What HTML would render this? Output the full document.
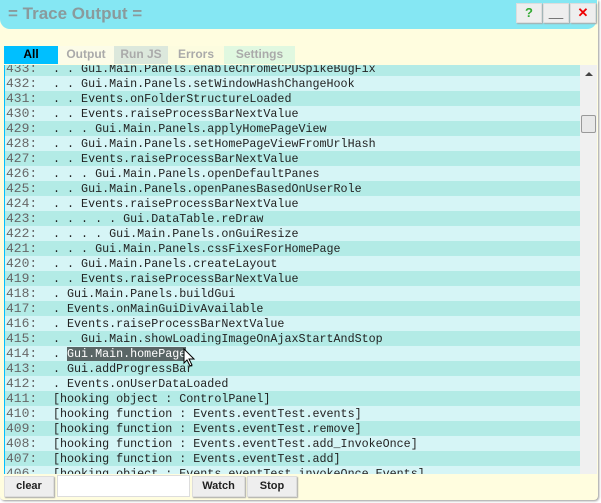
<html><head><style>
body{margin:0;width:601px;height:503px;background:#fff;position:relative;overflow:hidden;font-family:"Liberation Sans",sans-serif}
.win{position:absolute;left:0;top:0;width:598px;height:500px;background:#fffddf;border-radius:0 0 4px 4px;box-shadow:1px 1px 2px #999}
.hdr{position:absolute;left:0;top:0;width:597px;height:29px;background:#85e7f3;border-radius:0 0 10px 10px}
.title{position:absolute;left:8px;top:4px;font-size:17px;font-weight:bold;color:#8a9a9c}
.wb{position:absolute;top:3px;width:24px;height:18px;background:#eee;border:1px solid #ddd;box-shadow:1px 1px 1px #aaa;text-align:center;font-weight:bold;font-size:13px;line-height:18px}
.tab{position:absolute;top:46px;height:18px;font-size:12px;font-weight:bold;color:#aaa;text-align:center;line-height:17px}
.list{position:absolute;left:4px;top:65px;width:575px;height:409px;overflow:hidden;border-left:1px solid #00bfff;border-right:1px solid #00bfff}
.row{height:15px;line-height:15px;font-family:"Liberation Mono",monospace;font-size:11.7px;color:#222;white-space:pre;position:relative}
.row:nth-child(odd){background:#b3ebe6}.row:nth-child(even){background:#d6f5f6}
.n{color:#666;display:inline-block;width:47px;padding-left:1px;font-size:13px}
.sb{position:absolute;left:580px;top:65px;width:17px;height:409px;background:#f0f0f0}
.btn{position:absolute;top:476px;height:19px;background:#eee;border:1px solid #ddd;box-shadow:1px 1px 1px #aaa;font-size:11px;font-weight:bold;text-align:center;line-height:19px;color:#222}
</style></head><body>
<div class="win">
<div class="hdr"><div class="title">= Trace Output =</div>
<div class="wb" style="left:516px;color:#3a3">?</div>
<div class="wb" style="left:543px">__</div>
<div class="wb" style="left:570px;color:#e00">✕</div></div>
<div class="tab" style="left:4px;width:54px;background:#00bfff;color:#000">All</div>
<div class="tab" style="left:58px;width:56px;background:#fcfce8">Output</div>
<div class="tab" style="left:114px;width:54px;background:#dce8dc">Run JS</div>
<div class="tab" style="left:168px;width:56px;background:#fcfcdf">Errors</div>
<div class="tab" style="left:224px;width:71px;background:#e0f8e0">Settings</div>
<div class="list"><div style="margin-top:-4px">
<div class="row"><span class="n">433:</span>. . Gui.Main.Panels.enableChromeCPUSpikeBugFix</div>
<div class="row"><span class="n">432:</span>. . Gui.Main.Panels.setWindowHashChangeHook</div>
<div class="row"><span class="n">431:</span>. . Events.onFolderStructureLoaded</div>
<div class="row"><span class="n">430:</span>. . Events.raiseProcessBarNextValue</div>
<div class="row"><span class="n">429:</span>. . . Gui.Main.Panels.applyHomePageView</div>
<div class="row"><span class="n">428:</span>. . Gui.Main.Panels.setHomePageViewFromUrlHash</div>
<div class="row"><span class="n">427:</span>. . Events.raiseProcessBarNextValue</div>
<div class="row"><span class="n">426:</span>. . . Gui.Main.Panels.openDefaultPanes</div>
<div class="row"><span class="n">425:</span>. . Gui.Main.Panels.openPanesBasedOnUserRole</div>
<div class="row"><span class="n">424:</span>. . Events.raiseProcessBarNextValue</div>
<div class="row"><span class="n">423:</span>. . . . . Gui.DataTable.reDraw</div>
<div class="row"><span class="n">422:</span>. . . . Gui.Main.Panels.onGuiResize</div>
<div class="row"><span class="n">421:</span>. . . Gui.Main.Panels.cssFixesForHomePage</div>
<div class="row"><span class="n">420:</span>. . Gui.Main.Panels.createLayout</div>
<div class="row"><span class="n">419:</span>. . Events.raiseProcessBarNextValue</div>
<div class="row"><span class="n">418:</span>. Gui.Main.Panels.buildGui</div>
<div class="row"><span class="n">417:</span>. Events.onMainGuiDivAvailable</div>
<div class="row"><span class="n">416:</span>. Events.raiseProcessBarNextValue</div>
<div class="row"><span class="n">415:</span>. . Gui.Main.showLoadingImageOnAjaxStartAndStop</div>
<div class="row"><span class="n">414:</span>. <span style="background:#5a6666;color:#fff">Gui.Main.homePage</span></div>
<div class="row"><span class="n">413:</span>. Gui.addProgressBar</div>
<div class="row"><span class="n">412:</span>. Events.onUserDataLoaded</div>
<div class="row"><span class="n">411:</span>[hooking object : ControlPanel]</div>
<div class="row"><span class="n">410:</span>[hooking function : Events.eventTest.events]</div>
<div class="row"><span class="n">409:</span>[hooking function : Events.eventTest.remove]</div>
<div class="row"><span class="n">408:</span>[hooking function : Events.eventTest.add_InvokeOnce]</div>
<div class="row"><span class="n">407:</span>[hooking function : Events.eventTest.add]</div>
<div class="row"><span class="n">406:</span>[hooking object : Events.eventTest.invokeOnce_Events]</div>
</div></div>
<svg style="position:absolute;left:183px;top:348px" width="14" height="20"><path d="M1 1 L1 15 L4 12 L7 18 L9 17 L6 11 L11 11 Z" fill="#fff" stroke="#000"/></svg>
<div class="sb"><div style="position:absolute;left:5px;top:7px;width:0;height:0;border-left:4px solid transparent;border-right:4px solid transparent;border-bottom:4px solid #444"></div>
<div style="position:absolute;left:1px;top:50px;width:13px;height:16px;background:#e8e8e8;border:1px solid #999;border-radius:2px"></div></div>
<div class="btn" style="left:4px;width:48px">clear</div>
<div style="position:absolute;left:57px;top:475px;width:131px;height:20px;background:#fff;border:1px solid #ddd"></div>
<div class="btn" style="left:192px;width:51px">Watch</div>
<div class="btn" style="left:247px;width:48px">Stop</div>
</div>
</body></html>
